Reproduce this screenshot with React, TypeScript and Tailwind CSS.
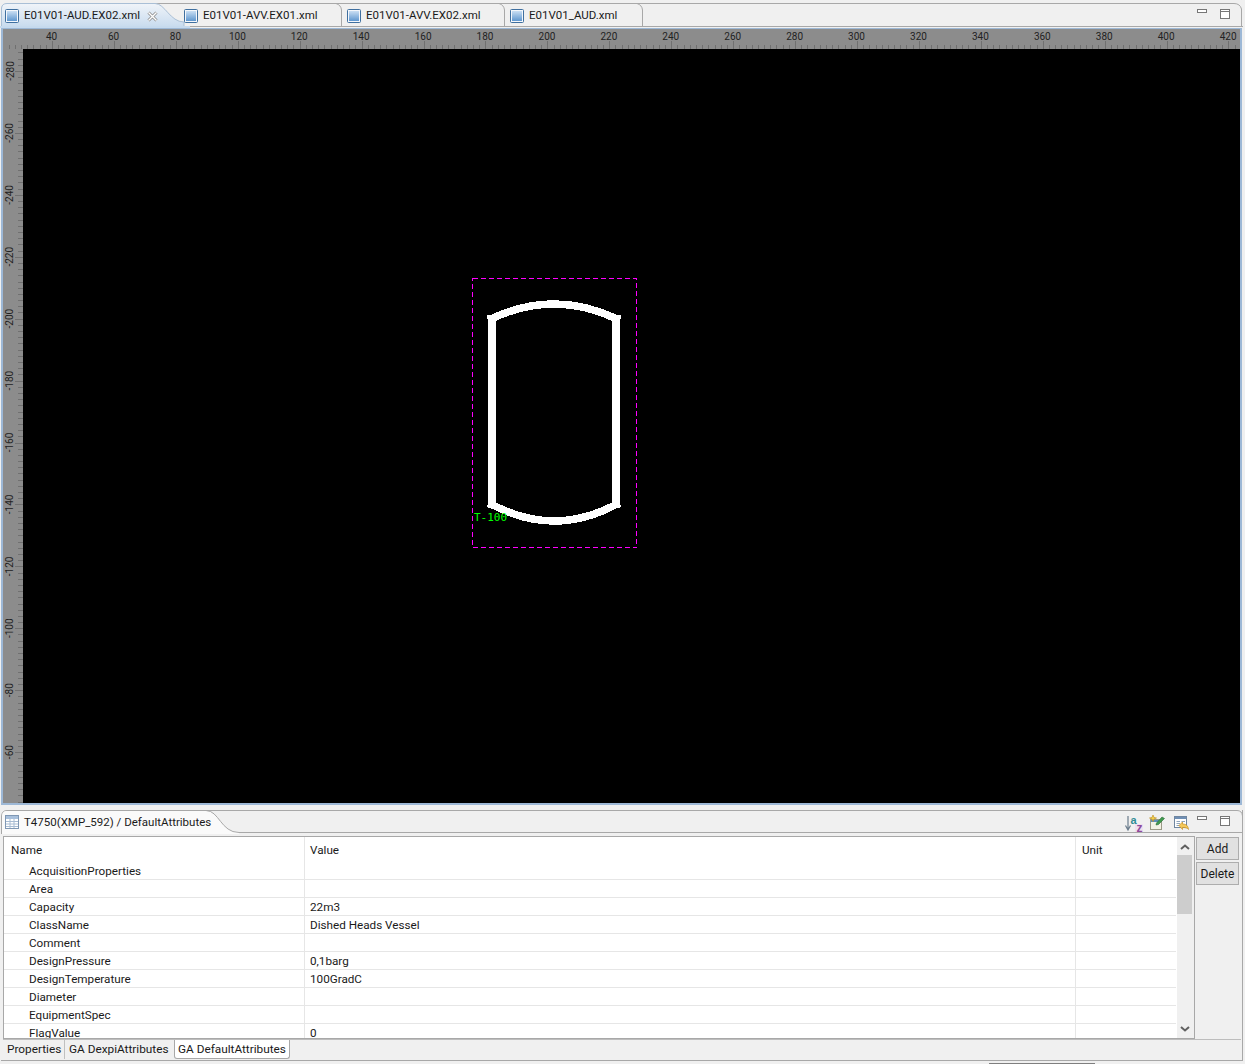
import React from 'react';

const rows = [
  { name: 'AcquisitionProperties', value: '' },
  { name: 'Area', value: '' },
  { name: 'Capacity', value: '22m3' },
  { name: 'ClassName', value: 'Dished Heads Vessel' },
  { name: 'Comment', value: '' },
  { name: 'DesignPressure', value: '0,1barg' },
  { name: 'DesignTemperature', value: '100GradC' },
  { name: 'Diameter', value: '' },
  { name: 'EquipmentSpec', value: '' },
  { name: 'FlagValue', value: '0' },
];

const editorTabs = [
  { label: 'E01V01-AUD.EX02.xml', width: 'w-[179px]', active: true },
  { label: 'E01V01-AVV.EX01.xml', width: 'w-[163px]', active: false },
  { label: 'E01V01-AVV.EX02.xml', width: 'w-[163px]', active: false },
  { label: 'E01V01_AUD.xml', width: 'w-[137px]', active: false },
];

function FileIcon() {
  return (
    <svg width="14" height="14" viewBox="0 0 14 14" className="shrink-0">
      <defs>
        <linearGradient id="fileFill" x1="0" y1="0" x2="0" y2="1">
          <stop offset="0" stopColor="#c9def3" />
          <stop offset="1" stopColor="#5f97cf" />
        </linearGradient>
      </defs>
      <rect x="0.5" y="0.5" width="13" height="13" rx="1" fill="#f4f7fb" stroke="#3f6f9f" />
      <rect x="2" y="2" width="10" height="10" fill="url(#fileFill)" />
    </svg>
  );
}

function CloseIcon() {
  return (
    <svg width="11" height="11" viewBox="0 0 11 11" className="ml-[7px] shrink-0">
      <path d="M1.5 1.5 L9.5 9.5 M9.5 1.5 L1.5 9.5" stroke="#8b8b8b" strokeWidth="3" />
      <path d="M1.5 1.5 L9.5 9.5 M9.5 1.5 L1.5 9.5" stroke="#ffffff" strokeWidth="1.4" />
    </svg>
  );
}

function MinMax() {
  return (
    <div className="flex items-start gap-[13px]">
      <svg width="10" height="4" viewBox="0 0 10 4">
        <rect x="0.5" y="0.5" width="9" height="3" fill="#fff" stroke="#777" />
      </svg>
      <svg width="10" height="10" viewBox="0 0 10 10">
        <rect x="0.5" y="0.5" width="9" height="9" fill="#fff" stroke="#777" />
        <path d="M1 2.5 H9" stroke="#777" />
      </svg>
    </div>
  );
}

function TopRuler() {
  const ticks = [];
  for (let v = 26; v <= 426; v += 2) {
    const x = Math.round(52 + (v - 40) * 3.096) - 3 + 0.5;
    ticks.push(<line key={v} x1={x} x2={x} y1={v % 20 === 0 ? 12 : 16} y2={20} stroke="#707070" />);
  }
  const labels = [];
  for (let v = 40; v <= 420; v += 20) {
    labels.push(
      <text key={v} x={51.6 + (v - 40) * 3.096 - 3} y={11} textAnchor="middle" fontSize="10" fill="#222">
        {v}
      </text>
    );
  }
  return (
    <svg width="1237" height="20" viewBox="0 0 1237 20" className="block" fontFamily="Roboto, sans-serif">
      {ticks}
      {labels}
    </svg>
  );
}

function LeftRuler() {
  const ticks = [];
  for (let v = -288; v <= -40; v += 2) {
    const y = Math.round(71 + (v + 280) * 3.096) - 49 + 0.5;
    if (y < 0 || y > 754) continue;
    ticks.push(<line key={v} y1={y} y2={y} x1={v % 20 === 0 ? 12 : 15} x2={20} stroke="#707070" />);
  }
  const labels = [];
  for (let v = -280; v <= -60; v += 20) {
    const y = 71 + (v + 280) * 3.096 - 49;
    labels.push(
      <text key={v} x={10} y={y} textAnchor="middle" fontSize="10" fill="#222" transform={`rotate(-90 10 ${y}) translate(0 0.5)`}>
        {v}
      </text>
    );
  }
  return (
    <svg width="20" height="754" viewBox="0 0 20 754" className="block shrink-0" fontFamily="Roboto, sans-serif">
      {ticks}
      {labels}
    </svg>
  );
}

function Vessel() {
  // drawing coordinates are relative to the canvas corner at (23, 49)
  return (
    <svg width="1217" height="754" viewBox="23 49 1217 754" className="block" shapeRendering="crispEdges">
      <rect x="472.5" y="278.5" width="164" height="269" fill="none" stroke="#ff00ff" strokeDasharray="5 3" />
      <g fill="none" stroke="#fff">
        <path d="M492 316 V508" strokeWidth="8" />
        <path d="M616 316 V508" strokeWidth="8" />
        <path d="M491 319 Q554 289 617 319" strokeWidth="7.5" />
        <path d="M491 504 Q554 538 617 504" strokeWidth="7.5" />
      </g>
      <g fill="#fff">
        <rect x="487" y="315" width="5" height="4" />
        <rect x="617" y="315" width="4" height="4" />
        <rect x="487" y="505" width="5" height="2" />
        <rect x="617" y="505" width="4" height="2" />
      </g>
      <text x="474" y="521" fontFamily="'DejaVu Sans Mono', monospace" fontSize="11" fill="#00ff00">
        T-100
      </text>
    </svg>
  );
}

function SortIcon() {
  return (
    <svg width="18" height="17" viewBox="0 0 18 17" className="overflow-visible" fontFamily="'Liberation Sans', sans-serif" fontWeight="700">
      <path d="M3 1 V14 M0.5 10.5 L3 15 L5.5 10.5" fill="none" stroke="#6b7c8c" strokeWidth="1.2" />
      <text x="5.5" y="8.5" fontSize="11" fill="#2f8c94">a</text>
      <rect x="10" y="9" width="8" height="8" fill="#efe0ef" />
      <text x="11.6" y="16.5" fontSize="12" fill="#8f4a9c">z</text>
    </svg>
  );
}

function NewIcon() {
  return (
    <svg width="16" height="15" viewBox="0 0 16 15">
      <rect x="1.5" y="4.5" width="11" height="10" fill="#f2f2e4" stroke="#9a9a86" />
      <path d="M2 5 H12 V7 H2 Z" fill="#5f8fb8" />
      <path d="M4 0 L5 2.5 L7.5 3 L5 4 L4 6.5 L3 4 L0.5 3 L3 2.5 Z" fill="#f5d24b" stroke="#b98a1a" strokeWidth="0.6" />
      <path d="M7.5 8 L13 2 L15.5 3.5 L9.5 9.5 L7 10 Z" fill="#3f9a4e" stroke="#2a6b36" strokeWidth="0.6" />
    </svg>
  );
}

function RestoreIcon() {
  return (
    <svg width="15" height="14" viewBox="0 0 15 14">
      <rect x="0.5" y="0.5" width="12" height="11" fill="#fff" stroke="#6f86a0" />
      <path d="M1 1 H12 V3 H1 Z" fill="#6f8fb5" />
      <path d="M2.5 5.5 H6 M2.5 7.5 H6 M2.5 9.5 H6 M7.5 5.5 H11" stroke="#8fa4bb" />
      <path d="M5 9.5 L8.5 6 V8 C12 8 14 9.5 14.5 13.5 C13.5 12 11.5 11.5 8.5 11.5 V13.5 Z" fill="#f5c95a" stroke="#c58f22" strokeWidth="0.7" />
    </svg>
  );
}

export default function App() {
  return (
    <div className="relative w-[1245px] h-[1064px] overflow-hidden bg-[#f0f0f0] font-['Roboto',sans-serif] text-[11.5px] text-[#1a1a1a]">
      {/* editor tabs */}
      <div className="relative h-[28px]">
        <svg width="1245" height="28" viewBox="0 0 1245 28" className="absolute inset-0">
          <defs>
            <linearGradient id="activeTab" x1="0" y1="0" x2="0" y2="1">
              <stop offset="0" stopColor="#f0f4f9" />
              <stop offset="1" stopColor="#c6daee" />
            </linearGradient>
          </defs>
          <path d="M155 3.5 H1234 Q1240 3.5 1241.5 9 V26" fill="none" stroke="#a8a8a8" />
          <path d="M0 26.5 H1243" stroke="#a8a8a8" />
          <path d="M336 3.5 Q341 5 341.5 10 V26 M499 3.5 Q504 5 504.5 10 V26 M637 3.5 Q642 5 642.5 10 V26" fill="none" stroke="#a8a8a8" />
          <path d="M1.5 28 V8 Q2 3.5 7 3.5 H155 C165 3.5 170 22 184 22 V28 Z" fill="url(#activeTab)" stroke="#a9bfd6" />
          <path d="M0 27 H190" stroke="#c6daee" strokeWidth="2" />
        </svg>
        <div className="relative flex h-[27px] pt-[5px]">
          {editorTabs.map((tab) => (
            <div key={tab.label} className={`${tab.width} flex items-center pl-[5px]`}>
              <FileIcon />
              <span className="ml-[5px] whitespace-nowrap">{tab.label}</span>
              {tab.active && <CloseIcon />}
            </div>
          ))}
          <div className="absolute left-[1197px] top-[9px]">
            <MinMax />
          </div>
        </div>
      </div>

      {/* drawing area */}
      <div className="ml-[1px] w-[1241px] h-[777px] border-2 border-t border-[#9db8d6] bg-[#8c8c8c] overflow-hidden">
        <div className="h-5 overflow-hidden">
          <TopRuler />
        </div>
        <div className="flex">
          <LeftRuler />
          <div className="bg-black w-[1217px] h-[754px]">
            <Vessel />
          </div>
        </div>
      </div>

      {/* properties panel */}
      <div className="relative ml-[1px] mt-[5px] w-[1242px] h-[251px] flex flex-col border-b border-r border-[#a8a8a8] bg-[#f0f0f0]">
        <svg width="1242" height="24" viewBox="0 0 1242 24" className="absolute left-0 top-0">
          <path d="M0.5 24 V6 Q1 0.5 6 0.5 H1236 Q1241 0.5 1241.5 6 V24" fill="none" stroke="#a8a8a8" />
          <path d="M1 23 V6 Q1.5 1 6 1 H205 C218 1 220 22 238 22 V24 H1 Z" fill="#fafafa" />
          <path d="M6 0.5 H205 C218 0.5 220 22.5 238 22.5 H1241" fill="none" stroke="#a8a8a8" />
        </svg>

        <div className="relative h-[24px] flex items-center pl-[4px] shrink-0">
          <svg width="14" height="14" viewBox="0 0 14 14">
            <rect x="0.5" y="0.5" width="13" height="13" fill="#fff" stroke="#7f97b3" />
            <path d="M1 1 H13 V4 H1 Z" fill="#a8c0dc" />
            <path d="M1 6.5 H13 M1 9 H13 M1 11.5 H13 M5 4 V13 M9 4 V13" stroke="#a8bcd3" />
          </svg>
          <span className="ml-[5px] pt-[2px]">T4750(XMP_592) / DefaultAttributes</span>
          <div className="absolute left-[1124px] top-[5px] flex items-start gap-[6px]">
            <SortIcon />
            <NewIcon />
            <div className="ml-[3px] mt-[1px]">
              <RestoreIcon />
            </div>
          </div>
          <div className="absolute left-[1196px] top-[6px]">
            <MinMax />
          </div>
        </div>

        <div className="flex h-[203px] mt-[2px] pl-[2px] shrink-0">
          {/* table */}
          <div className="flex w-[1192px] h-[203px] border border-[#a8a8a8] bg-white overflow-hidden text-[11.7px]">
            <div className="w-[1172px] h-[201px] overflow-hidden">
              <div className="grid grid-cols-[301px_771px_100px] h-[25px] leading-[26px]">
                <div className="pl-[7px] border-r border-[#e6e6e6]">Name</div>
                <div className="pl-[5px] border-r border-[#e6e6e6]">Value</div>
                <div className="pl-[6px]">Unit</div>
              </div>
              {rows.map((row) => (
                <div key={row.name} className="grid grid-cols-[301px_771px_100px] h-[18px] leading-[19px] border-b border-[#e6e6e6] box-border">
                  <div className="pl-[25px] border-r border-[#e6e6e6]">{row.name}</div>
                  <div className="pl-[5px] border-r border-[#e6e6e6]">{row.value}</div>
                  <div />
                </div>
              ))}
            </div>
            <div className="relative w-[18px] bg-[#f0f0f0] border-l border-white">
              <svg width="10" height="6" viewBox="0 0 10 6" className="absolute left-[3px] top-[7px]">
                <path d="M1 5 L5 1.5 L9 5" fill="none" stroke="#606060" strokeWidth="2" />
              </svg>
              <div className="absolute left-0 top-[18px] w-[15px] h-[59px] bg-[#cdcdcd]" />
              <svg width="10" height="6" viewBox="0 0 10 6" className="absolute left-[3px] bottom-[6px]">
                <path d="M1 1 L5 4.5 L9 1" fill="none" stroke="#606060" strokeWidth="2" />
              </svg>
            </div>
          </div>
          {/* buttons */}
          <div className="flex flex-col gap-[2px] pl-[1px] pt-[1px] text-[12px]">
            <button className="w-[43px] h-[23px] border border-[#adadad] bg-[#e1e1e1] leading-none">Add</button>
            <button className="w-[43px] h-[23px] border border-[#adadad] bg-[#e1e1e1] leading-none">Delete</button>
          </div>
        </div>

        <div className="h-[1px] bg-[#bdbdbd] mr-[1px] ml-[2px]" />
        <div className="flex h-[20px] pl-[3px] text-[11.8px]">
          <div className="w-[61px] h-[19px] px-[3px] leading-[18px] border-r border-[#c0c0c0] whitespace-nowrap">Properties</div>
          <div className="w-[109px] h-[19px] pl-[4px] leading-[18px] whitespace-nowrap">GA DexpiAttributes</div>
          <div className="w-[116px] h-[19px] pl-[3px] leading-[18px] bg-white border border-t-0 border-[#a8a8a8] rounded-b-[3px] whitespace-nowrap">GA DefaultAttributes</div>
        </div>
      </div>
      <div className="ml-[989px] mt-[2px] w-[106px] h-[1px] bg-[#7f7f7f]" />
    </div>
  );
}
